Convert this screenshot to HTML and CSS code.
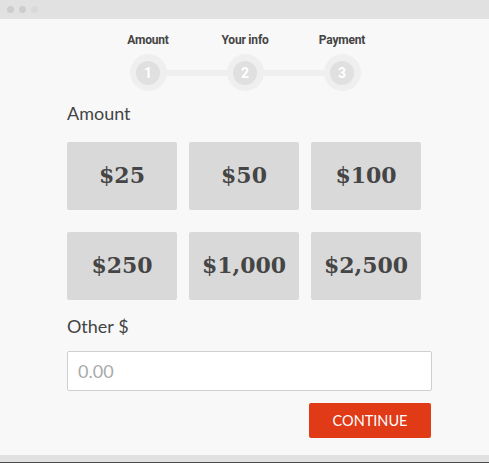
FILE: index.html
```html
<!DOCTYPE html>
<html>
<head>
<meta charset="utf-8">
<link rel="stylesheet" href="styles.css">
</head>
<body>
<div class="window">
  <div class="titlebar">
    <span class="dot"></span><span class="dot"></span><span class="dot light"></span>
  </div>
  <div class="content">
    <div class="steps">
      <div class="step"><div class="step-label">Amount</div><div class="step-circle"><span>1</span></div></div>
      <div class="step"><div class="step-label">Your info</div><div class="step-circle"><span>2</span></div></div>
      <div class="step"><div class="step-label">Payment</div><div class="step-circle"><span>3</span></div></div>
    </div>
    <div class="form">
      <div class="label">Amount</div>
      <div class="amounts">
        <button class="amount">$25</button>
        <button class="amount">$50</button>
        <button class="amount">$100</button>
        <button class="amount">$250</button>
        <button class="amount">$1,000</button>
        <button class="amount">$2,500</button>
      </div>
      <div class="label other">Other $</div>
      <input class="input" type="text" placeholder="0.00">
      <div class="actions"><button class="continue">CONTINUE</button></div>
    </div>
  </div>
  <div class="bottombar"></div>
</div>
</body>
</html>
```
FILE: styles.css
```css
* { box-sizing: border-box; }
html, body { margin: 0; padding: 0; }
body { width: 489px; height: 463px; background: #4a4a4a; font-family: "Lato", "Open Sans", sans-serif; overflow: hidden; }
.window { width: 489px; height: 462px; background: #f8f8f8; display: flex; flex-direction: column; }
.titlebar { height: 19px; background: #e1e1e1; display: flex; align-items: center; gap: 5px; padding-left: 7px; }
.dot { width: 7px; height: 7px; border-radius: 50%; background: #cdcdcd; }
.dot.light { background: #d9d9d9; }
.content { flex: 1; display: flex; flex-direction: column; }
.steps { display: flex; justify-content: center; padding-top: 13px; padding-left: 1px; }
.step { width: 97px; display: flex; flex-direction: column; align-items: center; position: relative; }
.step-label { font-family: "Roboto", sans-serif; font-weight: 700; font-size: 12px; color: #444; letter-spacing: -0.2px; height: 16px; line-height: 16px; }
.step-circle { margin-top: 6px; width: 37px; height: 37px; border-radius: 50%; background: #efefef; display: flex; align-items: center; justify-content: center; position: relative; z-index: 1; }
.step-circle span { width: 24px; height: 24px; border-radius: 50%; background: #e0e0e0; color: #fff; font-family: "Roboto", sans-serif; font-weight: 700; font-size: 14px; display: flex; align-items: center; justify-content: center; }
.step + .step::before { content: ""; position: absolute; left: -48px; width: 97px; top: 38px; height: 6px; background: #efefef; }
.form { padding: 11px 58px 0 67px; display: flex; flex-direction: column; }
.label { font-size: 18px; color: #444; line-height: 22px; }
.amounts { margin-top: 18px; display: grid; grid-template-columns: repeat(3, 110px); column-gap: 12px; row-gap: 22px; }
.amount { height: 68px; border: none; border-radius: 2px; background: #d9d9d9; font-family: "DejaVu Serif", serif; font-weight: 700; font-size: 22px; color: #454545; padding: 0 0 2px; }
.other { margin-top: 15px; }
.input { margin-top: 14px; width: 365px; height: 40px; border: 1px solid #cfcfcf; border-radius: 2px; background: #fff; padding: 0 10px; font-family: "Lato", sans-serif; font-size: 18px; color: #444; outline: none; }
.input::placeholder { color: #aaa; }
.actions { display: flex; justify-content: flex-end; width: 364px; margin-top: 12px; }
.continue { width: 122px; height: 35px; border: none; border-radius: 2px; background: #e03a17; color: #fff; font-family: "Lato", sans-serif; font-size: 14.5px; padding: 0; }
.bottombar { height: 7px; background: #e1e1e1; margin-top: auto; }
```
